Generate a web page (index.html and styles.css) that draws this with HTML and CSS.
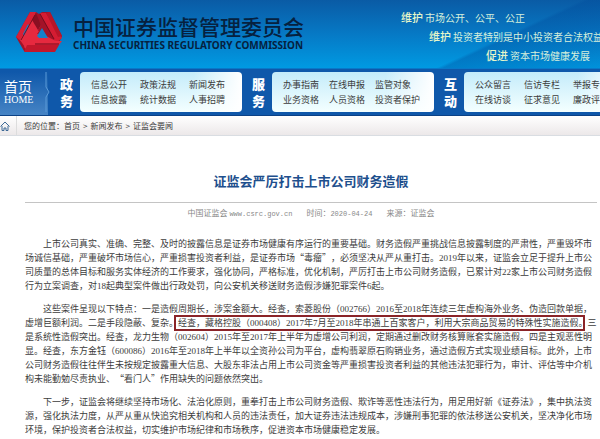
FILE: index.html
```html
<!DOCTYPE html>
<html lang="zh-CN">
<head>
<meta charset="utf-8">
<title>证监会严厉打击上市公司财务造假</title>
<link rel="stylesheet" href="styles.css">
</head>
<body>
<header class="banner">
  <svg class="logo" viewBox="0 0 48 44" aria-hidden="true">
    <path fill="#a31328" d="M15 1h6l3 2 3-2h8l12 24-7 15H9L1 26z"/>
    <path fill="#d81f36" d="M15 1h6L6 30l-5-4z"/>
    <path fill="#e42a40" d="M20 3 26 14 12 39 5 29z"/>
    <path fill="#8a0f22" d="m21 2 5 12-3 5-6-10z"/>
    <path fill="#d41c32" d="M25 2h6l16 25-6 5z"/>
    <path fill="#b81529" d="m35 1 12 24-4 1L31 2z"/>
    <path fill="#e6293f" d="M22 23h5l14 7h6l-3 4H20l-8 5-3-3 10-18 5 2z"/>
    <path fill="#c2172c" d="M12 34h32l-4 7H9z"/>
    <path fill="#1480ca" d="m27 17 6 10h-9l-2-2zM11 17l2-4 1 2-5 10-1-2z"/>
    <path fill="none" stroke="#750d1d" d="M6 29 20 4M25 3l14 25M20 33h24"/>
  </svg>
  <div class="brand">
    <div class="brand-zh">中国证券监督管理委员会</div>
    <div class="brand-en">CHINA SECURITIES REGULATORY COMMISSION</div>
  </div>
  <div class="slogans">
    <p class="slogan"><b>维护</b>市场公开、公平、公正</p>
    <p class="slogan second"><b>维护</b>投资者特别是中小投资者合法权益</p>
    <p class="slogan third"><b>促进</b>资本市场健康发展</p>
  </div>
</header>
<nav class="nav">
  <a class="home" href="#"><span class="home-zh">首页</span><span class="home-en">HOME</span>
    <svg class="chevron" viewBox="0 0 6 40" aria-hidden="true"><path d="M1 0v15l3 5-3 5v15" fill="none" stroke="#5b9bd8"/></svg>
  </a>
  <h2 class="group">政<br>务</h2>
  <div class="panel wide">
    <a href="#">信息公开</a><a href="#">政策法规</a><a href="#">新闻发布</a>
    <a href="#">信息披露</a><a href="#">统计数据</a><a href="#">人事招聘</a>
  </div>
  <h2 class="group">服<br>务</h2>
  <div class="panel">
    <a href="#">办事指南</a><a href="#">在线申报</a><a href="#">监管对象</a>
    <a href="#">业务资格</a><a href="#">人员资格</a><a href="#">投资者保护</a>
  </div>
  <h2 class="group">互<br>动</h2>
  <div class="panel wide">
    <a href="#">公众留言</a><a href="#">信访专栏</a><a href="#">举报专栏</a>
    <a href="#">在线访谈</a><a href="#">征求意见</a><a href="#">廉政评议</a>
  </div>
</nav>
<div class="crumbs">
  <span class="crumb-home"><svg viewBox="0 0 10 10" aria-hidden="true"><path d="M.5 5.500 5 1l4.500 4.500M2 5v4.500h2V7h2v2.500h2V5" fill="none" stroke="#3f6a96"/></svg></span>
  <span>您的位置：<a href="#">首页</a></span><i>&gt;</i><a href="#">新闻发布</a><i>&gt;</i><a href="#">证监会要闻</a>
</div>
<main class="article">
  <h1>证监会严厉打击上市公司财务造假</h1>
  <div class="meta">
    <span>中国证监会 <span class="mono">www.csrc.gov.cn</span></span>
    <span>时间：<span class="mono">2020-04-24</span></span>
    <span>来源：证监会</span>
  </div>
  <div class="text">
    <p>上市公司真实、准确、完整、及时的披露信息是证券市场健康有序运行的重要基础。财务造假严重挑战信息披露制度的严肃性，严重毁坏市<br>场诚信基础，严重破坏市场信心，严重损害投资者利益，是证券市场<q>毒瘤</q>，必须坚决从严从重打击。2019年以来，证监会立足于提升上市公<br>司质量的总体目标和服务实体经济的工作要求，强化协同，严格标准，优化机制，严厉打击上市公司财务造假，已累计对22家上市公司财务造假<br>行为立案调查，对18起典型案件做出行政处罚，向公安机关移送财务造假涉嫌犯罪案件6起。</p>
    <p>这些案件呈现以下特点：一是造假周期长，涉案金额大。经查，索菱股份（002766）2016至2018年连续三年虚构海外业务、伪造回款单据，<br>虚增巨额利润。二是手段隐蔽、复杂。<mark>经查，藏格控股（000408）2017年7月至2018年串通上百家客户，利用大宗商品贸易的特殊性实施造假。</mark>三<br>是系统性造假突出。经查，龙力生物（002604）2015年至2017年上半年为虚增公司利润，定期通过删改财务核算账套实施造假。四是主观恶性明<br>显。经查，东方金钰（600086）2016年至2018年上半年以全资孙公司为平台，虚构翡翠原石购销业务，通过造假方式实现业绩目标。此外，上市<br>公司财务造假往往伴生未按规定披露重大信息、大股东非法占用上市公司资金等严重损害投资者利益的其他违法犯罪行为，审计、评估等中介机<br>构未能勤勉尽责执业、<q>看门人</q>作用缺失的问题依然突出。</p>
    <p>下一步，证监会将继续坚持市场化、法治化原则，重拳打击上市公司财务造假、欺诈等恶性违法行为，用足用好新《证券法》，集中执法资<br>源，强化执法力度，从严从重从快追究相关机构和人员的违法责任，加大证券违法违规成本，涉嫌刑事犯罪的依法移送公安机关，坚决净化市场<br>环境，保护投资者合法权益，切实维护市场纪律和市场秩序，促进资本市场健康稳定发展。</p>
  </div>
</main>
</body>
</html>
```
FILE: styles.css
```css
* { box-sizing: border-box; }
body {
  margin: 0;
  overflow: hidden;
  background: #fff;
  color: #3c3c3c;
  font: 9px/14px "Noto Sans CJK SC", sans-serif;
  text-spacing-trim: space-all;
}
a { color: inherit; text-decoration: none; }
p, h1, h2 { margin: 0; }

.banner {
  display: flex;
  height: 68px;
  padding-left: 15px;
  overflow: hidden;
  white-space: nowrap;
  background:
    linear-gradient(155deg, transparent 78%, rgba(0, 75, 155, .35) 79%, rgba(0, 75, 155, .1)),
    linear-gradient(#0a5ba5, #0679c5 50%, #009ae2);
}
.logo { flex: none; width: 48px; height: 44px; margin-top: 11px; }
.brand { flex: none; width: 328px; padding: 14px 0 0 10px; color: #06213f; }
.brand-zh { font-size: 21px; line-height: 24px; font-weight: 500; }
.brand-en { font: 700 10px/14px "Noto Sans", sans-serif; }
.slogans { padding: 8px 0 0 10px; color: #d5efdc; font-size: 10px; line-height: 18px; }
.slogan b { margin-right: 2px; font-size: 11px; font-weight: 500; color: #e6f6c9; }
.second { padding-left: 28px; }
.third { padding-left: 85px; }

.nav {
  display: flex;
  height: 48px;
  padding-top: 3px;
  border-top: 1px solid #0879c9;
  border-bottom: 1px solid #0c4286;
  overflow: hidden;
  background: #0f58aa;
}
.home {
  position: relative;
  flex: none;
  width: 48px;
  height: 43px;
  padding: 6px 0 0 4px;
  color: #fff;
  background: linear-gradient(#0f58aa, #4684c5);
}
.home span { display: block; }
.home-zh { font-size: 14px; line-height: 16px; }
.home-en { font: 10px/11px "Liberation Serif", serif; }
.chevron { position: absolute; top: 0; right: -3px; width: 6px; height: 40px; }
.group {
  flex: none;
  width: 30px;
  padding: 3px 0 0 10px;
  color: #fff;
  font: 900 13px/17px "Noto Sans CJK SC", sans-serif;
}
.home + .group { width: 32px; padding-left: 12px; }
.panel {
  flex: none;
  display: grid;
  grid-template-columns: 46px 46px 1fr;
  grid-auto-rows: 15px;
  width: 162px;
  height: 40px;
  padding: 5px 0 0 11px;
  border-radius: 4px;
  line-height: 15px;
  white-space: nowrap;
  background: linear-gradient(90deg, rgba(255, 255, 255, 0) 70%, #fff), linear-gradient(#c4ebfa, #f4ffff);
}
.wide { grid-template-columns: 49px 49px 1fr; }

.crumbs {
  display: flex;
  align-items: center;
  height: 20px;
  border-bottom: 1px solid #d9dde2;
  font-size: 8px;
  background: linear-gradient(#fff, #ece8e9);
}
.crumb-home { width: 17px; height: 19px; margin-right: 7px; border-right: 1px solid #ddd; }
.crumb-home svg { width: 10px; height: 10px; margin-top: 5px; }
.crumbs i { margin: 0 3px; font-style: normal; }

.article { padding: 36px 3px 0 25px; }
h1 { color: #1e4f8d; font-size: 13px; line-height: 18px; text-align: center; }
.meta {
  display: flex;
  justify-content: center;
  gap: 14px;
  margin-top: 12px;
  padding-top: 3px;
  border-top: 1px solid #c4c4c4;
  color: #888;
  font-size: 8px;
}
.mono { font-family: "Liberation Mono", monospace; font-size: 7px; }
.text { margin-top: 16px; font-family: "Liberation Serif", "Noto Sans CJK SC", serif; white-space: nowrap; }
.text p { margin-bottom: 9px; text-indent: 2em; }
q { quotes: "“" "”"; font-family: "Noto Sans CJK SC", sans-serif; }
mark { position: relative; background: none; color: inherit; }
/* annotation frame drawn over the sentence */
mark::after {
  content: "";
  position: absolute;
  inset: -3px 3px -3px -4px;
  border: 2px solid #8b2428;
}
```
